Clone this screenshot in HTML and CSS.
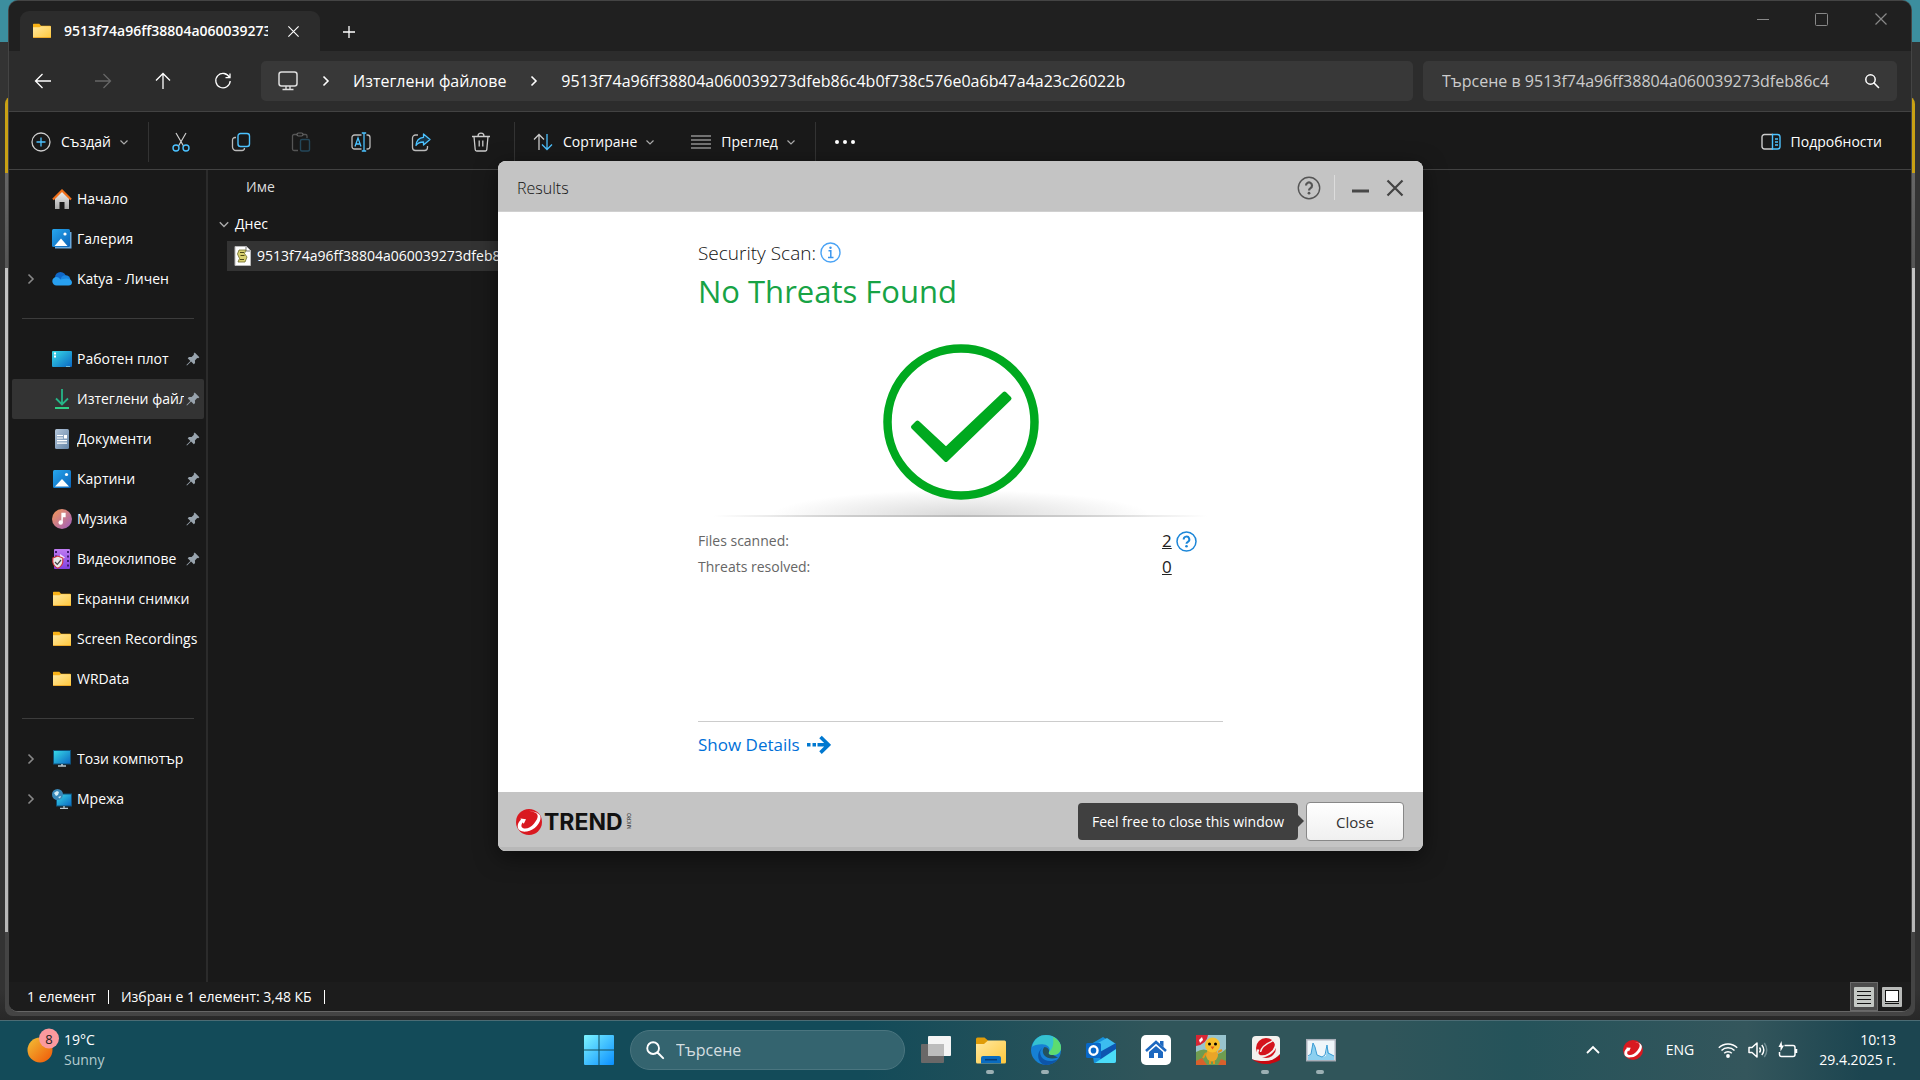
FILE: index.html
```
<!DOCTYPE html>
<html lang="bg">

<head>
    <meta charset="UTF-8">
    <meta name="viewport" content="width=device-width, initial-scale=1.0">
    <title>Results</title>
    <link rel="stylesheet" href="styles.css">
</head>

<body>
    <!-- shared icons and gradients -->
    <svg class="defs" aria-hidden="true">
        <defs>
            <linearGradient id="gFolder" x1="0" y1="0" x2="1" y2="1">
                <stop offset="0" stop-color="#ffe8a0" />
                <stop offset="1" stop-color="#ffc83c" />
            </linearGradient>
            <linearGradient id="gBlue" x1="0" y1="0" x2="1" y2="1">
                <stop offset="0" stop-color="#27a7ee" />
                <stop offset="1" stop-color="#0b63b8" />
            </linearGradient>
            <linearGradient id="gScreen" x1="0" y1="0" x2="1" y2="1">
                <stop offset="0" stop-color="#38dbe8" />
                <stop offset="1" stop-color="#0a66c2" />
            </linearGradient>
            <linearGradient id="gWin" x1="0" y1="0" x2="1" y2="1">
                <stop offset="0" stop-color="#7df4ff" />
                <stop offset="1" stop-color="#0a8fff" />
            </linearGradient>
            <linearGradient id="gSun" x1="0" y1="0" x2="1" y2="1">
                <stop offset="0.1" stop-color="#f2b632" />
                <stop offset="0.8" stop-color="#f06a10" />
            </linearGradient>
            <linearGradient id="gMusic" x1="0" y1="0" x2="1" y2="1">
                <stop offset="0" stop-color="#f79a55" />
                <stop offset="1" stop-color="#9c5cc0" />
            </linearGradient>
            <linearGradient id="gVideo" x1="0" y1="0" x2="0" y2="1">
                <stop offset="0" stop-color="#c07cf2" />
                <stop offset="1" stop-color="#8040e0" />
            </linearGradient>
            <linearGradient id="gDoc" x1="0" y1="0" x2="1" y2="1">
                <stop offset="0" stop-color="#b4c6da" />
                <stop offset="1" stop-color="#6484a6" />
            </linearGradient>
            <linearGradient id="gHouse" x1="0" y1="0" x2="0" y2="1">
                <stop offset="0" stop-color="#f2f2f2" />
                <stop offset="1" stop-color="#a8a8a8" />
            </linearGradient>
        </defs>
        <symbol id="chevron-right" viewBox="0 0 10 14">
            <path d="M2.5 2.5L7 7l-4.5 4.500" fill="none" stroke="currentColor" stroke-width="1.6" />
        </symbol>
        <symbol id="chevron-down" viewBox="0 0 10 10">
            <path d="M1.500 3.500L5 7l3.500-3.500" fill="none" stroke="currentColor" stroke-width="1.200" />
        </symbol>
        <symbol id="folder" viewBox="0 0 20 20">
            <path d="M1 3.500q0-.7.7-.7h5.600l1.700 2H18q1 0 1 1V10H1z" fill="#f9b216" />
            <path d="M1 6.200h6.500L9 5.200h9.300q.7 0 .7.700v10.400q0 .700-.700.700H1.700q-.7 0-.7-.7z" fill="url(#gFolder)" />
            <path d="M1 16.500h18" stroke="#e9a020" stroke-width=".8" />
        </symbol>
        <symbol id="pin" viewBox="0 0 14 14">
            <path d="M8.700.6l4.700 4.700-1.200 1-1-.2-2.300 2.300.2 2.600-1.300 1.300-2.700-2.700L1 13.600.4 13l4-4.100-2.700-2.700L3 4.900l2.600.2L7.900 2.800l-.2-1z" fill="#98a3ad" />
        </symbol>
        <symbol id="picture" viewBox="0 0 20 20">
            <rect x="1" y="1" width="18" height="18" rx="1.500" fill="url(#gBlue)" />
            <path d="M3 17.500l7-7.500 7 7.500z" fill="#fff" />
            <circle cx="14.500" cy="5.500" r="1.600" fill="#fff" />
        </symbol>
        <symbol id="search" viewBox="0 0 16 16">
            <circle cx="6.500" cy="6.500" r="4.700" fill="none" stroke="currentColor" stroke-width="1.500" />
            <path d="M10 10l4.500 4.500" stroke="currentColor" stroke-width="1.600" stroke-linecap="round" />
        </symbol>
        <symbol id="cross" viewBox="0 0 14 14">
            <path d="M1.500 1.500l11 11M12.500 1.500l-11 11" stroke="currentColor" stroke-width="1.200" />
        </symbol>
        <symbol id="swirl" viewBox="0 0 26 26">
            <circle cx="13" cy="13" r="13" fill="#d91920" />
            <path d="M13 1.800C18 2.500 24 4 24.500 8c.6 5.500-6 13.500-13.500 14.500C5 23.200 1.500 21 1.700 16.800c.1-2.300 1.500-4.300 3.200-6l-.4-1.200 5.500.6-2.200 4.600-1.200-1.300c-1.300 2-1.900 4.400.3 5.600 3.300 1.700 8-1 11-4.400 3.200-3.600 5.300-8 2.400-10.400C18.500 3 16 2.300 13 1.800z" fill="#fff" />
        </symbol>
    </svg>

    <div class="desktop">
        <main class="workspace">
            <div class="back-window"></div>

            <section class="explorer">
                <header class="titlebar">
                    <div class="tab">
                        <svg class="ico20"><use href="#folder" /></svg>
                        <span class="tab-name">9513f74a96ff38804a060039273dfeb86c4b</span>
                        <button class="tab-close" aria-label="Затваряне на раздела"><svg width="13" height="13"><use href="#cross" /></svg></button>
                    </div>
                    <button class="tab-add" aria-label="Нов раздел">
                        <svg width="14" height="14" viewBox="0 0 14 14"><path d="M7 1v12M1 7h12" stroke="currentColor" stroke-width="1.300" /></svg>
                    </button>
                    <div class="window-buttons">
                        <button aria-label="Намаляване"><svg width="12" height="12"><path d="M0 6.500h12" stroke="currentColor" /></svg></button>
                        <button aria-label="Увеличаване"><svg width="13" height="13"><rect x=".5" y=".5" width="12" height="12" rx="1" fill="none" stroke="currentColor" /></svg></button>
                        <button aria-label="Затваряне"><svg width="14" height="14"><use href="#cross" /></svg></button>
                    </div>
                </header>

                <nav class="navbar">
                    <button class="nav-btn" aria-label="Назад"><svg width="18" height="18" viewBox="0 0 18 18"><path d="M17 9H2M8.500 2L1.500 9l7 7" fill="none" stroke="currentColor" stroke-width="1.300" /></svg></button>
                    <button class="nav-btn off" aria-label="Напред"><svg width="18" height="18" viewBox="0 0 18 18"><path d="M1 9h15M9.500 2l7 7-7 7" fill="none" stroke="currentColor" stroke-width="1.300" /></svg></button>
                    <button class="nav-btn" aria-label="Нагоре"><svg width="18" height="18" viewBox="0 0 18 18"><path d="M9 17V2M2 8.500l7-7 7 7" fill="none" stroke="currentColor" stroke-width="1.300" /></svg></button>
                    <button class="nav-btn" aria-label="Обновяване"><svg width="18" height="18" viewBox="0 0 18 18"><path d="M15.500 5.500A7.200 7.200 0 1 0 16.200 9M16 1.500v4.200h-4.500" fill="none" stroke="currentColor" stroke-width="1.300" /></svg></button>
                    <div class="address">
                        <svg class="pc" width="20" height="20" viewBox="0 0 20 20"><rect x="1" y="1" width="18" height="14" rx="2.500" fill="none" stroke="#ddd" stroke-width="1.500" /><path d="M8 15v3M12 15v3M4.500 18.500h11" stroke="#ddd" stroke-width="1.400" /></svg>
                        <svg class="sep" width="10" height="14"><use href="#chevron-right" /></svg>
                        <button>Изтеглени файлове</button>
                        <svg class="sep" width="10" height="14"><use href="#chevron-right" /></svg>
                        <button>9513f74a96ff38804a060039273dfeb86c4b0f738c576e0a6b47a4a23c26022b</button>
                    </div>
                    <div class="find">
                        <input type="text" aria-label="Търсене" placeholder="Търсене в 9513f74a96ff38804a060039273dfeb86c4">
                        <svg width="16" height="16"><use href="#search" /></svg>
                    </div>
                </nav>

                <div class="toolbar">
                    <button class="tool">
                        <svg width="20" height="20" viewBox="0 0 20 20"><circle cx="10" cy="10" r="9" fill="none" stroke="#ccc" stroke-width="1.300" /><path d="M10 5.500v9M5.500 10h9" stroke="#4cc2ff" stroke-width="1.300" /></svg>
                        <span>Създай</span>
                        <svg class="arr" width="10" height="10"><use href="#chevron-down" /></svg>
                    </button>
                    <i class="split"></i>
                    <div class="tool-icons">
                        <button aria-label="Изрязване"><svg viewBox="0 0 20 20"><path d="M5 1l7.500 13M15 1L7.500 14" stroke="#ccc" stroke-width="1.200" /><g fill="none" stroke="#4cc2ff" stroke-width="1.400"><circle cx="5" cy="16" r="3" /><circle cx="15" cy="16" r="3" /></g></svg></button>
                        <button aria-label="Копиране"><svg viewBox="0 0 20 20"><path d="M5 5.500H4a2.500 2.500 0 0 0-2.500 2.500v7A3.500 3.500 0 0 0 5 18.500h6A2.500 2.500 0 0 0 13.500 16" fill="none" stroke="#bbb" stroke-width="1.300" /><rect x="7" y="1.500" width="11.500" height="13" rx="2.500" fill="none" stroke="#4cc2ff" stroke-width="1.400" /></svg></button>
                        <button aria-label="Поставяне"><svg viewBox="0 0 20 20"><path d="M6 2.500H3a1.500 1.500 0 0 0-1.500 1.500v13A1.500 1.500 0 0 0 3 18.500h4M12 2.500h2.500A1.500 1.500 0 0 1 16 4v2" fill="none" stroke="#555" stroke-width="1.300" /><rect x="6" y="1" width="6" height="3" rx="1.500" fill="none" stroke="#666" stroke-width="1.200" /><rect x="9.500" y="7.500" width="9" height="11.500" rx="1.500" fill="none" stroke="#24475a" stroke-width="1.400" /></svg></button>
                        <button aria-label="Преименуване"><svg viewBox="0 0 20 20"><path d="M10.500 3H3.500A2.500 2.500 0 0 0 1 5.500v9A2.500 2.500 0 0 0 3.500 17h7M15.500 3h1A2.500 2.500 0 0 1 19 5.500v9a2.500 2.500 0 0 1-2.500 2.500h-1" fill="none" stroke="#bbb" stroke-width="1.300" /><path d="M13 1v18M10.800 1h4.400M10.800 19h4.400M4 14.500L7 6l3 8.500M5 12h4" fill="none" stroke="#4cc2ff" stroke-width="1.300" /></svg></button>
                        <button aria-label="Споделяне"><svg viewBox="0 0 20 20"><path d="M7 3H4.500A3 3 0 0 0 1.500 6v9.500a3 3 0 0 0 3 3h9a3 3 0 0 0 3-3V14" fill="none" stroke="#bbb" stroke-width="1.300" /><path d="M12.500 2l6.500 5.500-6.500 5.500V10c-4 0-6 1-7.500 3.500C5.300 9 7.500 5.800 12.500 5.300z" fill="#173447" stroke="#4cc2ff" stroke-width="1.300" stroke-linejoin="round" /></svg></button>
                        <button aria-label="Изтриване"><svg viewBox="0 0 20 20"><path d="M1 4.500h18M7 4.200a3 3 0 0 1 6 0M3 4.500l1.200 13a1.500 1.500 0 0 0 1.500 1.500h8.600a1.500 1.500 0 0 0 1.500-1.500L17 4.500M8.200 8.500v6M11.800 8.500v6" fill="none" stroke="#ccc" stroke-width="1.300" /></svg></button>
                    </div>
                    <i class="split"></i>
                    <button class="tool">
                        <svg width="20" height="20" viewBox="0 0 20 20"><path d="M6 18V3M1 7.500l5-5 5 5" fill="none" stroke="#ccc" stroke-width="1.300" /><path d="M14 2v15M9 12.500l5 5 5-5" fill="none" stroke="#4cc2ff" stroke-width="1.300" /></svg>
                        <span>Сортиране</span>
                        <svg class="arr" width="10" height="10"><use href="#chevron-down" /></svg>
                    </button>
                    <button class="tool view">
                        <svg width="20" height="20" viewBox="0 0 20 20"><path d="M0 4h20M0 8h20M0 12h20M0 16h20" stroke="#ccc" stroke-width="1.200" /></svg>
                        <span>Преглед</span>
                        <svg class="arr" width="10" height="10"><use href="#chevron-down" /></svg>
                    </button>
                    <i class="split"></i>
                    <button class="more" aria-label="Още"><svg width="22" height="6"><circle cx="3" cy="3" r="2" fill="#fff" /><circle cx="11" cy="3" r="2" fill="#fff" /><circle cx="19" cy="3" r="2" fill="#fff" /></svg></button>
                    <button class="tool details">
                        <svg width="20" height="18" viewBox="0 0 20 18"><path d="M12 1.500H3.500A2.500 2.500 0 0 0 1 4v9.500A2.500 2.500 0 0 0 3.500 16H12" fill="none" stroke="#ccc" stroke-width="1.400" /><path d="M11.500 1.500h5A2.500 2.500 0 0 1 19 4v9.500a2.500 2.500 0 0 1-2.500 2.500h-5zM14 6h3M14 9h3M14 12h3" fill="none" stroke="#4cc2ff" stroke-width="1.400" /></svg>
                        <span>Подробности</span>
                    </button>
                </div>

                <div class="panes">
                    <aside class="sidebar">
                        <a href="#" class="place"><i class="exp"></i><svg class="ico20" viewBox="0 0 20 20"><path d="M3 9l7-7 7 7v11h-4.500v-7h-5v7H3z" fill="url(#gHouse)" /><path d="M1 10.500l9-9 9 9" fill="none" stroke="#f0701c" stroke-width="2.200" /></svg><span>Начало</span></a>
                        <a href="#" class="place"><i class="exp"></i><svg class="ico20" viewBox="0 0 20 20"><path d="M3 3h16.500v16.500H3z" fill="#6aa8dc" /><rect width="18" height="18" rx="1.500" fill="url(#gBlue)" /><path d="M2.500 17l6.500-7.500 6.500 7.500z" fill="#fff" /><circle cx="13" cy="5" r="1.600" fill="#fff" /></svg><span>Галерия</span></a>
                        <a href="#" class="place"><i class="exp"><svg width="10" height="14"><use href="#chevron-right" /></svg></i><svg class="ico20" viewBox="0 0 20 20"><circle cx="8.500" cy="8.500" r="5.500" fill="#1068c8" /><circle cx="13.500" cy="11" r="4.800" fill="#1a86e0" /><path d="M4.500 16.500a4.200 4.200 0 0 1 0-8.400q2 0 4 2.400l6-1q5.500.5 5.500 4 0 3-3.500 3z" fill="#28a0f0" /></svg><span>Katya - Личен</span></a>
                        <hr>
                        <a href="#" class="place"><i class="exp"></i><svg class="ico20" viewBox="0 0 20 20"><rect y="2" width="20" height="16" rx="1" fill="url(#gScreen)" /><path d="M2 4.500h2M2 7.500h2" stroke="#fff" stroke-width="2" /><path d="M14.500 17.500h4" stroke="#cfe" stroke-dasharray="1 1" /></svg><span>Работен плот</span><svg class="pin"><use href="#pin" /></svg></a>
                        <a href="#" class="place selected"><i class="exp"></i><svg class="ico20" viewBox="0 0 20 20"><path d="M10 0v15.500M4 9.500l6 6 6-6" fill="none" stroke="#26b688" stroke-width="1.800" /><path d="M3 19h14" stroke="#2fcf86" stroke-width="2" /></svg><span>Изтеглени файлове</span><svg class="pin"><use href="#pin" /></svg></a>
                        <a href="#" class="place"><i class="exp"></i><svg class="ico20" viewBox="0 0 20 20"><rect x="3" width="14" height="20" rx="1.500" fill="url(#gDoc)" /><path d="M5 6.500h6M5 9h6M5 11.700h10M5 14.200h10" stroke="#fff" stroke-width="1.200" /><path d="M12 6h3v3.500h-3z" fill="#fff" /></svg><span>Документи</span><svg class="pin"><use href="#pin" /></svg></a>
                        <a href="#" class="place"><i class="exp"></i><svg class="ico20"><use href="#picture" /></svg><span>Картини</span><svg class="pin"><use href="#pin" /></svg></a>
                        <a href="#" class="place"><i class="exp"></i><svg class="ico20" viewBox="0 0 20 20"><circle cx="10" cy="10" r="10" fill="url(#gMusic)" /><circle cx="8.700" cy="13.500" r="2.200" fill="#fff" /><path d="M10 13.500V4.500h3v3h-2" fill="#fff" stroke="#fff" stroke-width="1.300" /></svg><span>Музика</span><svg class="pin"><use href="#pin" /></svg></a>
                        <a href="#" class="place"><i class="exp"></i><svg class="ico20" viewBox="0 0 20 20"><rect x="2" width="16" height="20" rx="1" fill="url(#gVideo)" /><path d="M4 2v16M16 2v16" stroke="#3c1a70" stroke-width="2" stroke-dasharray="2 2.500" /><path d="M8 5l5 3.500-5 3z" fill="#f0e0ff" /><path d="M.8 9l5-2 5 2v4q-.5 4-5 6.200-4.500-2.200-5-6.200z" fill="#e8e8e8" stroke="#d03038" stroke-width="1.100" /><path d="M3 13l2.300 2.300L9 11" fill="none" stroke="#444" stroke-width="1.200" /></svg><span>Видеоклипове</span><svg class="pin"><use href="#pin" /></svg></a>
                        <a href="#" class="place"><i class="exp"></i><svg class="ico20"><use href="#folder" /></svg><span>Екранни снимки</span></a>
                        <a href="#" class="place"><i class="exp"></i><svg class="ico20"><use href="#folder" /></svg><span>Screen Recordings</span></a>
                        <a href="#" class="place"><i class="exp"></i><svg class="ico20"><use href="#folder" /></svg><span>WRData</span></a>
                        <hr>
                        <a href="#" class="place"><i class="exp"><svg width="10" height="14"><use href="#chevron-right" /></svg></i><svg class="ico20" viewBox="0 0 20 20"><rect x="1.500" y="1.500" width="17" height="13.500" fill="url(#gScreen)" stroke="#0f5078" /><path d="M10 15v2M6 17h8" stroke="#b8c8d0" stroke-width="1.600" /></svg><span>Този компютър</span></a>
                        <a href="#" class="place"><i class="exp"><svg width="10" height="14"><use href="#chevron-right" /></svg></i><svg class="ico20" viewBox="0 0 20 20"><rect x="4.500" y="5" width="15" height="12" fill="url(#gScreen)" stroke="#0f5078" /><path d="M12 17v2M8 19.300h8" stroke="#b8c8d0" stroke-width="1.300" /><circle cx="5.500" cy="5.500" r="5.500" fill="#3a88b8" /><path d="M2 4l3-2 2 1-1 3-2 1zM6 8l3-1-1 2.500z" fill="#d4ecf6" /></svg><span>Мрежа</span></a>
                    </aside>

                    <div class="files">
                        <div class="col-name">Име</div>
                        <div class="group"><svg width="12" height="12"><use href="#chevron-down" /></svg>Днес</div>
                        <div class="file">
                            <svg width="17" height="20" viewBox="0 0 17 20"><path d="M1 .5h11.500l4 4v15H1z" fill="#fff" stroke="#b8b8b8" /><path d="M12 1v4h4" fill="none" stroke="#777" /><path d="M5 4h7l-1.500 3.500L13 11l-2 5H4l1.500-3.500L3.500 8z" fill="#d8d070" stroke="#6c6a28" stroke-width=".8" /><path d="M6 6.500h4M6.500 9.500h4M6 13.500h4" stroke="#4a4818" /></svg>
                            <span>9513f74a96ff38804a060039273dfeb8</span>
                        </div>
                    </div>
                </div>

                <footer class="statusbar">
                    <span>1 елемент</span>
                    <i></i>
                    <span>Избран е 1 елемент: 3,48 КБ</span>
                    <i></i>
                    <div class="layouts">
                        <button class="on" aria-label="Подробни данни"><svg width="20" height="20"><rect width="20" height="20" rx="1" fill="#c4c8c4" /><path d="M3 4.500h14M3 8.500h14M3 12.500h14M3 16.500h14" stroke="#111" /></svg></button>
                        <button aria-label="Големи икони"><svg width="20" height="20"><rect width="20" height="20" rx="1" fill="#b8bab8" /><rect x="3.500" y="3.500" width="13" height="11" fill="#fff" stroke="#111" /><path d="M3 16.500h14" stroke="#111" /></svg></button>
                    </div>
                </footer>
            </section>

            <section class="dialog">
                <header class="dialog-head">
                    <h1>Results</h1>
                    <button aria-label="Help"><svg width="24" height="24" viewBox="0 0 24 24"><circle cx="12" cy="12" r="10.700" fill="none" stroke="#555" stroke-width="1.400" /><path d="M9 9.500a3 3 0 1 1 4.500 2.600q-1.500.9-1.500 2.400" fill="none" stroke="#555" stroke-width="2.200" /><circle cx="12" cy="17.200" r="1.400" fill="#555" /></svg></button>
                    <i></i>
                    <button aria-label="Minimize"><svg width="17" height="17"><path d="M0 12h17" stroke="#484848" stroke-width="3" /></svg></button>
                    <button aria-label="Close window"><svg width="18" height="18" viewBox="0 0 18 18"><path d="M1.500 1.500l15 15M16.500 1.500l-15 15" stroke="#444" stroke-width="2.200" /></svg></button>
                </header>
                <div class="dialog-body">
                    <div class="scan-label">Security Scan:
                        <svg width="21" height="21" viewBox="0 0 21 21"><circle cx="10.500" cy="10.500" r="9.500" fill="none" stroke="#4aa3f5" stroke-width="1.400" /><path d="M8.500 8.800h2.300v6.500M8 15.500h5.500" fill="none" stroke="#3b96ee" stroke-width="1.500" /><circle cx="10.500" cy="5.700" r="1.200" fill="#3b96ee" /></svg>
                    </div>
                    <h2>No Threats Found</h2>
                    <div class="shield">
                        <svg width="156" height="156" viewBox="0 0 156 156"><circle cx="78" cy="78" r="73.500" fill="#fff" stroke="#00a91f" stroke-width="8.500" /><path d="M34.500 78.500l-4.500 4.500 33 33L126.500 54.500l-5-5L63 105z" fill="#00a91f" stroke="#00a91f" stroke-width="4" stroke-linejoin="round" /></svg>
                    </div>
                    <dl class="stats">
                        <dt>Files scanned:</dt>
                        <dd><a href="#">2</a><svg width="21" height="21" viewBox="0 0 21 21"><circle cx="10.500" cy="10.500" r="9.500" fill="none" stroke="#1c86d8" stroke-width="1.500" /><path d="M7.700 8.500a2.800 2.800 0 1 1 4.200 2.300q-1.400.8-1.400 2" fill="none" stroke="#1c86d8" stroke-width="2" /><circle cx="10.500" cy="15.300" r="1.300" fill="#1c86d8" /></svg></dd>
                        <dt>Threats resolved:</dt>
                        <dd><a href="#">0</a></dd>
                    </dl>
                    <a href="#" class="show-details">Show Details
                        <svg width="24" height="20" viewBox="0 0 24 20"><path d="M0 8h3.500v3.500H0zM5.500 8H9v3.500H5.500z" fill="#0078d0" /><path d="M10.500 9.800h11M13.500 2l8 7.800-8 7.800" fill="none" stroke="#0078d0" stroke-width="3.600" /></svg>
                    </a>
                </div>
                <footer class="dialog-foot">
                    <div class="brand">
                        <svg width="26" height="26"><use href="#swirl" /></svg>
                        <b>TREND</b><small>MICRO</small>
                    </div>
                    <div class="tip">Feel free to close this window</div>
                    <button class="close">Close</button>
                </footer>
            </section>
        </main>

        <footer class="taskbar">
            <div class="weather">
                <svg width="34" height="36" viewBox="0 0 34 36"><circle cx="13" cy="22" r="12.500" fill="url(#gSun)" /><circle cx="22" cy="10.500" r="10" fill="#fb9a9e" /><text x="22" y="15.500" text-anchor="middle" class="badge">8</text></svg>
                <div><div>19°C</div><div class="dim">Sunny</div></div>
            </div>
            <div class="apps">
                <button aria-label="Старт"><svg class="start" viewBox="0 0 29 29"><path d="M1 0h13v14H0V1q0-1 1-1zM15 0h13q1 0 1 1v13H15zM0 15h14v14H1q-1 0-1-1zM15 15h14v13q0 1-1 1H15z" fill="url(#gWin)" /></svg></button>
                <label class="task-search">
                    <svg width="20" height="20"><use href="#search" /></svg>
                    <input type="text" placeholder="Търсене">
                </label>
                <button aria-label="Изглед на задачите"><svg viewBox="0 0 30 30"><rect x="0" y="9" width="23" height="19" rx="1" fill="#6a6868" /><rect x="7" y="1" width="23" height="20" rx="1" fill="#f4f4f4" /><rect x="7" y="9" width="16" height="12" fill="#bcbcbc" /></svg></button>
                <button class="run" aria-label="File Explorer"><svg viewBox="0 0 30 30"><path d="M0 4q0-1.500 1.500-1.500h7L12 5.500v5H0z" fill="#e09c08" /><path d="M0 9h8l4-3.500h16.500Q30 5.500 30 7v20q0 1.500-1.500 1.500h-27Q0 28.500 0 27z" fill="url(#gFolder)" /><path d="M5 28.500V23q0-2 2-2h16q2 0 2 2v5.500z" fill="#0a6cc0" /><path d="M9 24.700h12" stroke="#083e78" stroke-width="1.500" /></svg></button>
                <button class="run" aria-label="Edge"><svg viewBox="0 0 30 30"><circle cx="15" cy="15" r="15" fill="#1680d4" /><path d="M1 12C3 3 9 0 15 0c9 0 15 6 15 12.500 0 4.500-3 7.500-8 7.500-4 0-5-1.500-4-3 2-3.500-.5-7-5-7.500-5-.5-10 .5-12 2.500z" fill="#35c2d0" /><path d="M22 2c5 2.500 8 6.500 8 10.500 0 4.500-3 7.500-8 7.500-4 0-5-1.500-4-3 4-3 5-9 4-15z" fill="#5ddc70" /><path d="M13 12c-4 2-5 6-2.500 10 3 4.500 10 5.500 16.500 2-4 5-9 6.500-14 5.700C6 27 4.500 16.500 13 12z" fill="#0d55a8" /><path d="M13.500 12c-2.500 2.500-2 6 0 8.500 2.500 3 8 4 13.500 2l-5-2.500c-4 .5-5-1.500-4-3 .8-2-1.500-5-4.500-5z" fill="#24525e" /></svg></button>
                <button aria-label="Outlook"><svg viewBox="0 0 30 30"><path d="M5 9L17 2l13 8v16q0 2-2 2H8z" fill="#1590dc" /><path d="M12 8l9-5 9 6-14 10z" fill="#3cbcf0" /><path d="M12 18L30 8v7L15 25z" fill="#0e55b0" /><path d="M9 28L30 14v12q0 2-2 2z" fill="#4bdcf8" /><rect y="8" width="15" height="15" rx="1.500" fill="#0868c8" /><ellipse cx="7.500" cy="15.500" rx="4" ry="4.300" fill="none" stroke="#fff" stroke-width="2.400" /></svg></button>
                <button aria-label="Home"><svg viewBox="0 0 30 30"><rect width="30" height="30" rx="5" fill="#fff" /><path d="M5 16L15 7l10 9" fill="none" stroke="#1d68c0" stroke-width="2.600" /><path d="M8 17l7-6 7 6v6h-5v-5h-4v5H8zM19 6h3.500v6L19 9z" fill="#1d68c0" /></svg></button>
                <button aria-label="Game"><svg viewBox="0 0 30 30"><rect width="30" height="30" fill="#98c4ce" /><path d="M0 17q8-5 15 0t15-3v16H0z" fill="#6f9c50" /><path d="M0 26l6-3 5 7H0zM22 30l3-6 5 2v4z" fill="#d8602c" /><path d="M0 0h12q-1 9-12 11z" fill="#d82634" /><path d="M3 5l3-3 1 3-3 3z" fill="#fff" /><ellipse cx="16" cy="20" rx="6" ry="6.500" fill="#eaa528" /><circle cx="16.500" cy="10" r="7.500" fill="#f8c02c" /><path d="M10 18l-3 5M22 17l4-2M14 26v3M18 26v3" stroke="#e89018" stroke-width="2" /><circle cx="13.500" cy="9" r="1.500" /><circle cx="19.500" cy="9" r="1.500" /><path d="M14.500 11.500h4l-2 3z" fill="#e05818" /></svg></button>
                <button class="run" aria-label="Trend Micro"><svg viewBox="0 0 30 30"><path d="M1 20h28v5q-6 4-14 4T1 24z" fill="#c80810" /><path d="M5 1h20q4 0 4 4v14q-6 7-15 7-9 0-13-2V5q0-4 4-4z" fill="#f3f1ee" /><circle cx="15" cy="13" r="10" fill="#d4141c" /><path d="M21 4.500q5 2 3.500 7C22.500 18 14 22.500 9 21q-4-1.500-1.500-6.500" fill="none" stroke="#f3f1ee" stroke-width="2" /><path d="M9.500 17q1-6.500 12-11" fill="none" stroke="#f3f1ee" stroke-width="1.500" /></svg></button>
                <button class="run" aria-label="Монитор"><svg viewBox="0 0 30 30"><rect x=".7" y="4.700" width="28.600" height="21" fill="#eef6fa" stroke="#a8aeb8" stroke-width="1.500" /><path d="M2 22l3-3 2-11 2 4 2 8 5 2 4-1 1-11 2 8 5 3v4H2z" fill="#8cd0f0" /><path d="M2 21l3-2 2-11 2 4 2 8 5 2 3-2 2-10 1 8 6 3" fill="none" stroke="#3a9cd4" /></svg></button>
            </div>
            <div class="tray">
                <button aria-label="Скрити икони"><svg width="16" height="10" viewBox="0 0 16 10"><path d="M2 8l6-6 6 6" fill="none" stroke="#fff" stroke-width="1.800" /></svg></button>
                <svg width="20" height="20" viewBox="0 0 26 26"><use href="#swirl" /></svg>
                <span class="lang">ENG</span>
                <div class="status-icons">
                    <svg width="20" height="16" viewBox="0 0 20 16"><g fill="none" stroke="#fff" stroke-width="1.500"><path d="M.8 5.800a13 13 0 0 1 18.400 0M3.500 8.500a9.200 9.200 0 0 1 13 0M6.200 11.200a5.400 5.400 0 0 1 7.600 0" /></g><circle cx="10" cy="14" r="1.900" fill="#fff" /></svg>
                    <svg width="20" height="18" viewBox="0 0 20 18"><path d="M1 6.500h3L9 2v14l-5-4.500H1z" fill="none" stroke="#fff" stroke-width="1.500" stroke-linejoin="round" /><path d="M11.500 6.500q2 2.500 0 5M13.800 4q4 5 0 10" fill="none" stroke="#fff" stroke-width="1.400" /><path d="M16.300 2q5 7 0 14" fill="none" stroke="#6f8b90" stroke-width="1.400" /></svg>
                    <svg width="20" height="18" viewBox="0 0 20 18"><path d="M6.500 4.500H15A2 2 0 0 1 17 6.500v7a2 2 0 0 1-2 2H3.500a2 2 0 0 1-2-2V11M18.500 8v4" fill="none" stroke="#fff" stroke-width="1.500" /><path d="M3.500 0L.5 6h2v4.500L6 4.500H4z" fill="#fff" /></svg>
                </div>
                <div class="clock"><div>10:13</div><div>29.4.2025 г.</div></div>
            </div>
        </footer>
    </div>
</body>

</html>
```
FILE: styles.css
```
* {
    box-sizing: border-box;
    margin: 0;
    padding: 0;
}

body {
    font-family: "Open Sans", "Noto Sans", sans-serif;
    font-size: 14px;
    line-height: 20px;
    color: #fff;
}

button,
input {
    font: inherit;
    color: inherit;
    background: none;
    border: 0;
}

button {
    display: flex;
    align-items: center;
    justify-content: center;
}

a {
    color: inherit;
    text-decoration: none;
}

svg {
    display: block;
    flex: none;
}

.defs {
    position: absolute;
    width: 0;
    height: 0;
}

.ico20 {
    width: 20px;
    height: 20px;
}

.desktop {
    display: flex;
    flex-direction: column;
    height: 100vh;
    overflow: hidden;
}

.workspace {
    position: relative;
    flex: 1;
    display: flex;
    min-height: 0;
    padding: 1px 9px 8px;
    background: linear-gradient(#3c8e9e 42px, #333 42px, #333 calc(100% - 30px), #282828);
}

/* edges of the window that lies behind the explorer */
.back-window {
    position: absolute;
    top: 96px;
    right: 5px;
    bottom: 4px;
    left: 5px;
    border-radius: 8px;
    background: linear-gradient(#c9a114 77px, #666 77px, #555 172px, #c4c4c4 172px, #b8b8b8 836px, #444 836px);
}

/* explorer window */
.explorer {
    position: relative;
    flex: 1;
    display: flex;
    flex-direction: column;
    min-width: 0;
    background: #191919;
    border-radius: 9px;
    border-bottom: 1px solid #666;
    box-shadow: 0 0 0 1px #444;
    overflow: hidden;
}

.titlebar {
    display: flex;
    height: 50px;
    padding: 0 1px 0 11px;
    background: #202020;
}

.tab {
    display: flex;
    align-items: center;
    width: 300px;
    margin-top: 10px;
    padding: 0 12px;
    background: #2c2c2c;
    border-radius: 9px 9px 0 0;
}

.tab-name {
    width: 204px;
    margin-left: 12px;
    font-weight: 600;
    overflow: hidden;
    white-space: nowrap;
}

.tab-close {
    width: 28px;
    height: 28px;
    margin-left: 11px;
}

.tab-add {
    width: 58px;
    margin-top: 12px;
}

.window-buttons {
    display: flex;
    height: 36px;
    margin-left: auto;
    color: #888;
}

.window-buttons button {
    width: 59px;
}

.navbar {
    display: flex;
    align-items: center;
    height: 61px;
    padding: 0 14px 0 4px;
    background: #2c2c2c;
    border-bottom: 1px solid #424242;
}

.nav-btn {
    width: 60px;
    height: 40px;
}

.off {
    color: #666;
}

.address,
.find {
    display: flex;
    align-items: center;
    height: 40px;
    background: #383838;
    border-radius: 5px;
    font-size: 16px;
}

.address {
    flex: 1;
    min-width: 0;
    margin-left: 8px;
    padding-left: 17px;
    white-space: nowrap;
}

.address .sep {
    margin: 0 22px 0 23px;
}

.find {
    width: 474px;
    margin-left: 10px;
    padding: 0 17px 0 19px;
}

.find input {
    flex: 1;
    min-width: 0;
    margin-right: 24px;
}

.find input::placeholder {
    color: #ccc;
}

.toolbar {
    display: flex;
    align-items: center;
    height: 58px;
    padding: 3px 29px 0 22px;
    border-bottom: 1px solid #424242;
}

.tool {
    gap: 10px;
    height: 40px;
}

.tool .arr {
    color: #aaa;
    margin-left: -2px;
}

.split {
    width: 1px;
    height: 40px;
    margin: 0 18px 0 19px;
    background: #333;
}

.tool-icons {
    display: flex;
    margin: 0 -16px;
}

.tool-icons button {
    width: 60px;
    height: 40px;
}

.tool-icons svg {
    width: 20px;
    height: 20px;
}

.view {
    margin-left: 36px;
}

.details {
    margin-left: auto;
}

.panes {
    flex: 1;
    display: flex;
    min-height: 0;
}

.sidebar {
    width: 199px;
    padding: 9px 2px 0 3px;
    border-right: 2px solid #2b2b2b;
}

.place {
    display: flex;
    align-items: center;
    height: 40px;
    white-space: nowrap;
}

.place .exp {
    display: flex;
    justify-content: center;
    width: 40px;
    padding-right: 2px;
    color: #888;
}

.place span {
    flex: 1;
    min-width: 0;
    margin-left: 5px;
    overflow: hidden;
}

.place .pin {
    width: 14px;
    height: 14px;
    margin: 0 4px 0 2px;
}

.selected {
    background: #333;
    border-radius: 2px;
}

.sidebar hr {
    height: 1px;
    margin: 19px 10px 20px;
    background: #3c3c3c;
    border: 0;
}

.files {
    flex: 1;
    min-width: 0;
    padding: 7px 12px 0 10px;
}

.col-name {
    padding-left: 28px;
    color: #ddd;
}

.group {
    display: flex;
    align-items: center;
    gap: 5px;
    height: 30px;
    margin-top: 12px;
}

.group svg {
    color: #aaa;
}

.file {
    display: flex;
    align-items: center;
    gap: 6px;
    width: 300px;
    height: 30px;
    margin: 2px 0 0 9px;
    padding-left: 7px;
    background: #333;
}

.statusbar {
    display: flex;
    align-items: center;
    gap: 12px;
    height: 29px;
    padding: 0 9px 0 18px;
    background: #1c1c1c;
}

.statusbar i {
    width: 1px;
    height: 14px;
    background: #fff;
}

.layouts {
    display: flex;
    align-self: stretch;
    gap: 4px;
    margin-left: auto;
}

.layouts button {
    width: 20px;
}

.layouts .on {
    width: 28px;
    background: #4c4c4c;
    border: 1px solid #6a6a6a;
}

/* scan results window */
.dialog {
    position: absolute;
    top: 161px;
    left: 498px;
    display: flex;
    flex-direction: column;
    width: 925px;
    height: 690px;
    background: #fff;
    border-radius: 8px;
    box-shadow: 0 6px 22px rgba(0, 0, 0, .5);
    color: #333;
    overflow: hidden;
}

.dialog-head {
    display: flex;
    align-items: center;
    height: 51px;
    padding: 3px 19px 0;
    background: #c4c4c4;
    border-bottom: 1px solid #d0d0d0;
}

.dialog-head h1 {
    flex: 1;
    font-size: 16px;
    font-weight: 300;
    color: #111;
}

.dialog-head i {
    width: 1px;
    height: 25px;
    margin: 0 17px 0 13px;
    background: #dcdcdc;
}

.dialog-head button + button {
    margin-left: 17px;
}

.dialog-body {
    flex: 1;
    padding: 26px 200px 0;
}

.scan-label {
    display: flex;
    gap: 4px;
    line-height: 30px;
    font-size: 19px;
    font-weight: 300;
    color: #111;
}

.scan-label svg {
    margin-top: 4px;
}

.dialog-body h2 {
    line-height: 46px;
    font-size: 31px;
    font-weight: 400;
    color: #17a345;
}

.shield {
    display: flex;
    justify-content: center;
    height: 173px;
    margin-top: 30px;
    background:
        linear-gradient(90deg, transparent 3%, #ccc 30%, #bbb 50%, #ccc 70%, transparent 97%) bottom / 100% 2px no-repeat,
        radial-gradient(190px 26px at 50% 172px, #d8d8d8, transparent) no-repeat;
}

.stats {
    display: grid;
    grid-template-columns: 1fr 61px;
    margin-top: 11px;
    line-height: 26px;
}

.stats dt {
    color: #666;
}

.stats dd {
    display: flex;
    align-items: center;
    gap: 4px;
    font-size: 17px;
}

.stats a {
    color: #222;
    text-decoration: underline;
}

.show-details {
    display: flex;
    align-items: center;
    gap: 7px;
    margin-top: 141px;
    padding-top: 13px;
    border-top: 1px solid #ccc;
    font-size: 17px;
    color: #0070d8;
}

.dialog-foot {
    display: flex;
    align-items: center;
    height: 59px;
    padding: 4px 19px 0 18px;
    background: #c4c4c4;
    border-bottom: 4px solid #b8b8b8;
}

.brand {
    display: flex;
    align-items: center;
    flex: 1;
    color: #111;
}

.brand b {
    margin-left: 2px;
    font-family: Inter, "Liberation Sans", sans-serif;
    font-size: 23px;
}

.brand small {
    margin-left: 3px;
    writing-mode: vertical-rl;
    transform: rotate(180deg);
    font-size: 5px;
    line-height: 7px;
}

.tip {
    position: relative;
    width: 220px;
    height: 37px;
    line-height: 37px;
    text-align: center;
    background: #404040;
    border-radius: 4px;
    color: #fff;
}

.tip::after {
    content: "";
    position: absolute;
    top: 12px;
    left: 100%;
    border: 6px solid transparent;
    border-left-color: #404040;
}

.close {
    width: 98px;
    height: 39px;
    margin-left: 8px;
    background: linear-gradient(#fff, #f0f0f0);
    border: 1px solid #888;
    border-radius: 4px;
    font-size: 15px;
}

/* taskbar */
.taskbar {
    display: flex;
    align-items: center;
    justify-content: space-between;
    height: 60px;
    padding: 0 24px 2px 27px;
    background: linear-gradient(90deg, #134b59 45%, #30555a 60%, #30555a 72%, #25535a 79%, #34565c 91%, #1c4550 97%);
    border-top: 1px solid #4c6c74;
}

.weather {
    display: flex;
    flex: 1;
    gap: 3px;
}

.weather > svg {
    margin-top: -2px;
}

.dim {
    color: #b4ccd0;
}

.badge {
    font-size: 13px;
    fill: #222;
}

.apps {
    display: flex;
    align-items: center;
    margin-right: 4px;
}

.apps button {
    position: relative;
    width: 55px;
    height: 57px;
}

.apps button svg {
    width: 30px;
    height: 30px;
}

.run::after {
    content: "";
    position: absolute;
    bottom: 4px;
    left: 23px;
    width: 8px;
    height: 4px;
    border-radius: 2px;
    background: #9cb0b4;
}

.task-search {
    display: flex;
    align-items: center;
    gap: 11px;
    width: 275px;
    height: 40px;
    margin: 0 3px 0 4px;
    padding: 0 14px;
    background: #34646f;
    border: 1px solid #4a757f;
    border-radius: 20px;
    font-size: 16px;
}

.task-search input {
    flex: 1;
    min-width: 0;
}

.task-search input::placeholder {
    color: #d4dee0;
}

.tray {
    display: flex;
    flex: 1;
    align-items: center;
    justify-content: flex-end;
}

.tray > svg {
    margin-left: 22px;
}

.lang {
    margin-left: 23px;
}

.status-icons {
    display: flex;
    align-items: center;
    gap: 10px;
    margin: 0 21px 0 24px;
}

.clock {
    text-align: right;
}
```
